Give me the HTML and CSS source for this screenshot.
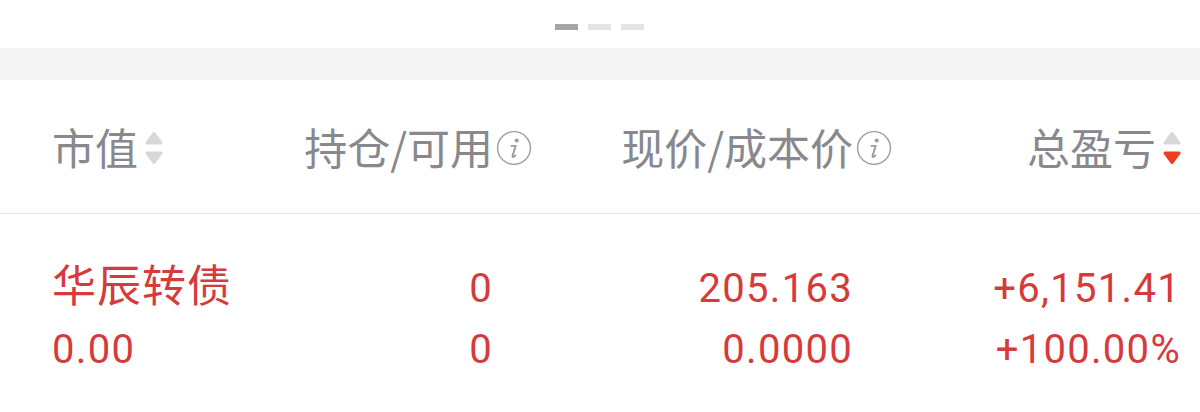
FILE: index.html
```html
<!DOCTYPE html>
<html lang="zh-CN">
<head>
  <meta charset="UTF-8" />
  <meta name="viewport" content="width=device-width, initial-scale=1.0"/>
  <title>持仓</title>
  <link rel="stylesheet" href="styles.css">
</head>
<body>

  <div class="pager">
    <span class="dot active"></span>
    <span class="dot"></span>
    <span class="dot"></span>
  </div>

  <div class="band"></div>

  <div class="table-head">
    <div class="cell left">
      市值
      <svg class="sort" width="18" height="34" viewBox="0 0 18 34">
        <polygon points="9,2.5 16,12 2,12" fill="#d8d8d8" stroke="#d8d8d8" stroke-width="3" stroke-linejoin="round"/>
        <polygon points="9,31.5 16,22 2,22" fill="#d8d8d8" stroke="#d8d8d8" stroke-width="3" stroke-linejoin="round"/>
      </svg>
    </div>
    <div class="cell">
      持仓/可用
      <svg class="info" width="36" height="36" viewBox="0 0 34 34">
        <circle cx="17" cy="17" r="15.5" fill="none" stroke="#9c9c9c" stroke-width="1.3"/>
        <circle cx="19.6" cy="10" r="1.9" fill="#9c9c9c"/>
        <path d="M14.6 15 H18.6 L15.6 24.5 Q15.2 26 16.8 25.2 L18.2 24.2" fill="none" stroke="#9c9c9c" stroke-width="1.8" stroke-linecap="round" stroke-linejoin="round"/>
      </svg>
    </div>
    <div class="cell">
      现价/成本价
      <svg class="info" width="36" height="36" viewBox="0 0 34 34">
        <circle cx="17" cy="17" r="15.5" fill="none" stroke="#9c9c9c" stroke-width="1.3"/>
        <circle cx="19.6" cy="10" r="1.9" fill="#9c9c9c"/>
        <path d="M14.6 15 H18.6 L15.6 24.5 Q15.2 26 16.8 25.2 L18.2 24.2" fill="none" stroke="#9c9c9c" stroke-width="1.8" stroke-linecap="round" stroke-linejoin="round"/>
      </svg>
    </div>
    <div class="cell">
      总盈亏
      <svg class="sort" width="18" height="34" viewBox="0 0 18 34">
        <polygon points="9,2.5 16,12 2,12" fill="#d8d8d8" stroke="#d8d8d8" stroke-width="3" stroke-linejoin="round"/>
        <polygon points="9,31.5 16,22 2,22" fill="#ee3f1f" stroke="#ee3f1f" stroke-width="3" stroke-linejoin="round"/>
      </svg>
    </div>
  </div>

  <div class="table-body">
    <div class="row">
      <div class="cell left name">华辰转债</div>
      <div class="cell">0</div>
      <div class="cell">205.163</div>
      <div class="cell">+6,151.41</div>
    </div>
    <div class="row">
      <div class="cell left">0.00</div>
      <div class="cell">0</div>
      <div class="cell">0.0000</div>
      <div class="cell">+100.00%</div>
    </div>
  </div>

</body>
</html>
```

FILE: styles.css
```css
* { box-sizing: border-box; }

body {
  margin: 0;
  background: #fff;
  font-family: Roboto, "Noto Sans CJK SC", sans-serif;
  overflow: hidden;
}

.pager {
  height: 48px;
  display: flex;
  justify-content: center;
  align-items: flex-start;
  gap: 10px;
  padding-top: 24px;
  padding-right: 2px;
}

.dot {
  width: 23px;
  height: 6px;
  background: #e5e5e5;
}

.dot.active {
  background: #a6a6a6;
}

.band {
  height: 32px;
  background: #f4f4f4;
}

.table-head,
.row {
  display: grid;
  grid-template-columns: 200px 241px 360px 328px;
  padding-left: 52px;
}

.table-head {
  height: 134px;
  align-items: center;
  border-bottom: 1px solid #e6e6e6;
  font-family: "Noto Sans CJK SC", sans-serif;
  font-size: 43px;
  color: #88888d;
}

.table-head .cell {
  display: flex;
  align-items: center;
  justify-content: flex-end;
  line-height: 1;
}

.table-head .cell.left {
  justify-content: flex-start;
}

.sort {
  flex: none;
  margin-left: 7px;
  margin-top: 2px;
}

.info {
  flex: none;
  margin-left: 3px;
  margin-right: -39px;
  margin-top: 2px;
}

.table-body {
  padding-top: 39px;
  color: #d73a3a;
}

.row {
  align-items: baseline;
  font-size: 40px;
  letter-spacing: 1.3px;
  line-height: 61px;
}

.row .cell {
  text-align: right;
}

.row .cell.left {
  text-align: left;
}

.name {
  font-family: "Noto Sans CJK SC", sans-serif;
  font-size: 44px;
  letter-spacing: 1px;
}
```
